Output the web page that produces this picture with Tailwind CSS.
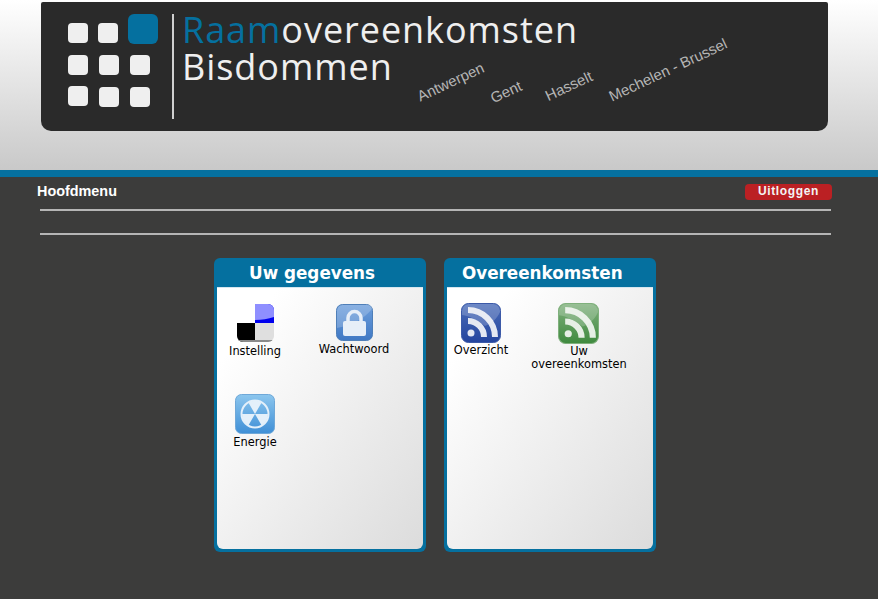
<!DOCTYPE html>
<html lang="nl">
<head>
    <meta charset="UTF-8">
    <meta name="viewport" content="width=device-width, initial-scale=1.0">
    <title>Raamovereenkomsten Bisdommen</title>
    <script src="https://cdn.jsdelivr.net/npm/@tailwindcss/browser@4"></script>
</head>
<body class="h-[599px] overflow-hidden bg-[#3c3c3b] font-['DejaVu_Sans',sans-serif]">

    <!-- Header -->
    <header class="h-[177px] border-b-[7px] border-[#05709f] bg-gradient-to-b from-[#ffffff] to-[#c9c9c9] pt-[2px]">
        <div class="relative ml-[41px] flex h-[129px] w-[787px] items-start rounded-b-[10px] rounded-t-[2px] bg-[#2a2a2a] pt-[12px]">
            <!-- Logo mark -->
            <svg class="ml-[27px] h-[93px] w-[90px] shrink-0" viewBox="0 0 90 93">
                <g fill="#efefef">
                    <rect x="0" y="9" width="20" height="20" rx="4"/>
                    <rect x="30" y="9" width="20" height="20" rx="4"/>
                    <rect x="0" y="41" width="20" height="20" rx="4"/>
                    <rect x="31" y="41" width="20" height="20" rx="4"/>
                    <rect x="62" y="41" width="20" height="20" rx="4"/>
                    <rect x="0" y="72" width="20" height="20" rx="4"/>
                    <rect x="31" y="73" width="20" height="20" rx="4"/>
                    <rect x="62" y="73" width="20" height="20" rx="4"/>
                </g>
                <rect x="60" y="0" width="30" height="30" rx="6" fill="#05709f"/>
            </svg>
            <div class="ml-[14px] h-[105px] w-[2px] shrink-0 bg-[#cfcfcf]"></div>
            <div class="ml-[8px] -mt-[3px] font-['Open_Sans',sans-serif] text-[36px] leading-[37px] tracking-[0.95px] text-[#efefef]">
                <div><span class="text-[#05709f]">Raam</span>overeenkomsten</div>
                <div>Bisdommen</div>
            </div>
            <!-- Bisdommen labels -->
            <span class="absolute left-[374px] top-[69px] -rotate-[25deg] font-['Liberation_Sans',sans-serif] text-[15px] text-[#b5b5b5]">Antwerpen</span>
            <span class="absolute left-[449px] top-[79px] -rotate-[25deg] font-['Liberation_Sans',sans-serif] text-[15px] text-[#b5b5b5]">Gent</span>
            <span class="absolute left-[503px] top-[73px] -rotate-[25deg] font-['Liberation_Sans',sans-serif] text-[15px] text-[#b5b5b5]">Hasselt</span>
            <span class="absolute left-[563px] top-[57px] -rotate-[25deg] font-['Liberation_Sans',sans-serif] text-[15px] text-[#b5b5b5]">Mechelen - Brussel</span>
        </div>
    </header>

    <!-- Menu bar -->
    <div class="ml-[37px] w-[795px] pt-[6px]">
        <div class="flex h-[17px] items-center justify-between">
            <span class="font-['Liberation_Sans',sans-serif] text-[14.4px] font-bold text-white">Hoofdmenu</span>
            <span class="flex h-[16px] w-[87px] items-center justify-center rounded-[4px] bg-[#bb2023] pb-[1px] font-['Liberation_Sans',sans-serif] text-[12px] font-bold tracking-[0.65px] text-[#f3f3f3]">Uitloggen</span>
        </div>
        <div class="ml-[3px] mt-[9px] h-[2px] w-[791px] bg-[#b5b5b5]"></div>
        <div class="ml-[3px] mt-[22px] h-[2px] w-[791px] bg-[#b5b5b5]"></div>
    </div>

    <!-- Panels -->
    <main class="ml-[214px] mt-[23px] flex gap-[18px]">

        <section class="h-[294px] w-[212px] rounded-[6px] bg-[#05709f] px-[3px] pb-[3px]">
            <h2 class="h-[29px] pl-[32px] pt-[4px] text-[16.8px] font-bold leading-[22px] text-white">Uw gegevens</h2>
            <div class="grid h-[262px] grid-cols-[76px_122px] grid-rows-[90px_90px] content-start rounded-b-[6px] border-t border-[#d5e6ef] bg-gradient-to-br from-white from-[15%] to-[#dcdcdc] pt-[16px] text-[11.4px] leading-[13px] text-black">
                <a class="flex flex-col items-center">
                    <svg class="h-[38px] w-[38px]" viewBox="0 0 38 38">
                        <defs><clipPath id="dl"><rect x="1" y="0" width="37" height="38" rx="6"/></clipPath></defs>
                        <g clip-path="url(#dl)">
                            <rect x="0" y="0" width="19" height="19" fill="#ffffff"/>
                            <rect x="19" y="0" width="19" height="19" fill="#0000ee"/>
                            <path d="M19 0h19v13c-6 2-12 3-19 3z" fill="#8f8fff"/>
                            <rect x="0" y="19" width="19" height="19" fill="#000000"/>
                            <rect x="19" y="19" width="19" height="19" fill="#dfdfdf"/>
                            <rect x="1" y="36" width="37" height="2" fill="#8a8a8a"/>
                        </g>
                    </svg>
                    <span class="mt-[3px] text-center">Instelling</span>
                </a>
                <a class="flex flex-col items-center">
                    <svg class="h-[37px] w-[37px]" viewBox="0 0 37 37">
                        <defs><linearGradient id="lk" x1="0" y1="0" x2="0" y2="1"><stop offset="0" stop-color="#6e9fdc"/><stop offset="1" stop-color="#3f78c4"/></linearGradient></defs>
                        <rect x="0.500" y="0.500" width="36" height="36" rx="6" fill="url(#lk)" stroke="#4f7fb8"/>
                        <path d="M1 7a6 6 0 0 1 6-6h29v4c-8 10-20 16-35 19z" fill="#ffffff" opacity="0.2"/>
                        <path d="M12 18v-4a6.500 6.500 0 0 1 13 0v4" fill="none" stroke="#e6eef8" stroke-width="3.500"/>
                        <rect x="7" y="17" width="23" height="15" rx="2" fill="#e6eef8"/>
                    </svg>
                    <span class="mt-[2px] text-center">Wachtwoord</span>
                </a>
                <a class="flex flex-col items-center">
                    <svg class="h-[40px] w-[40px]" viewBox="0 0 40 40">
                        <defs><linearGradient id="en" x1="0" y1="0" x2="0" y2="1"><stop offset="0" stop-color="#8cc6ee"/><stop offset="1" stop-color="#3f8fd6"/></linearGradient></defs>
                        <rect x="0.500" y="0.500" width="39" height="39" rx="6" fill="url(#en)" stroke="#6fa8d8"/>
                        <circle cx="20" cy="20" r="13.500" fill="none" stroke="#e4f0fa" stroke-width="2"/>
                        <path d="M20 20L13.500 8.700A13 13 0 0 1 26.500 8.700Z M20 20L33 20A13 13 0 0 1 26.500 31.300Z M20 20L13.500 31.300A13 13 0 0 1 7 20Z" fill="#e4f0fa"/>
                    </svg>
                    <span class="mt-[2px] text-center">Energie</span>
                </a>
            </div>
        </section>

        <section class="h-[294px] w-[212px] rounded-[6px] bg-[#05709f] px-[3px] pb-[3px]">
            <h2 class="h-[29px] pl-[15px] pt-[4px] text-[16.8px] font-bold leading-[22px] text-white">Overeenkomsten</h2>
            <div class="grid h-[262px] grid-cols-[68px_128px] content-start rounded-b-[6px] border-t border-[#d5e6ef] bg-gradient-to-br from-white from-[15%] to-[#dcdcdc] pt-[15px] text-[11.4px] leading-[13px] text-black">
                <a class="flex flex-col items-center">
                    <svg class="h-[40px] w-[40px]" viewBox="0 0 40 40">
                        <defs><linearGradient id="rb" x1="0" y1="0" x2="0" y2="1"><stop offset="0" stop-color="#4a6cb8"/><stop offset="1" stop-color="#24459e"/></linearGradient>
                        <clipPath id="rbc"><rect x="1" y="1" width="38" height="38" rx="7"/></clipPath></defs>
                        <rect x="0.500" y="0.500" width="39" height="39" rx="7" fill="url(#rb)" stroke="#3c5aa8"/>
                        <g clip-path="url(#rbc)">
                            <circle cx="10" cy="30" r="3.500" fill="#e4e8f2"/>
                            <path d="M7 18a16 16 0 0 1 16 16" fill="none" stroke="#e4e8f2" stroke-width="6"/>
                            <path d="M7 7a27 27 0 0 1 27 27" fill="none" stroke="#e4e8f2" stroke-width="6"/>
                            <path d="M1 1h38v8c-3 7-9 12-15 14c-8-6-15-10-23-11z" fill="#ffffff" opacity="0.2"/>
                        </g>
                    </svg>
                    <span class="mt-[1px] text-center">Overzicht</span>
                </a>
                <a class="flex flex-col items-center">
                    <svg class="h-[41px] w-[41px] -translate-x-[1px]" viewBox="0 0 40 40">
                        <defs><linearGradient id="rg" x1="0" y1="0" x2="0" y2="1"><stop offset="0" stop-color="#7fb07c"/><stop offset="1" stop-color="#3f8a3f"/></linearGradient>
                        <clipPath id="rgc"><rect x="1" y="1" width="38" height="38" rx="7"/></clipPath></defs>
                        <rect x="0.500" y="0.500" width="39" height="39" rx="7" fill="url(#rg)" stroke="#7fb07c"/>
                        <g clip-path="url(#rgc)">
                            <circle cx="10" cy="30" r="3.500" fill="#e6efe5"/>
                            <path d="M7 18a16 16 0 0 1 16 16" fill="none" stroke="#e6efe5" stroke-width="6"/>
                            <path d="M7 7a27 27 0 0 1 27 27" fill="none" stroke="#e6efe5" stroke-width="6"/>
                            <path d="M1 1h38v8c-3 7-9 12-15 14c-8-6-15-10-23-11z" fill="#ffffff" opacity="0.2"/>
                        </g>
                    </svg>
                    <span class="mt-[1px] text-center">Uw<br>overeenkomsten</span>
                </a>
            </div>
        </section>
    </main>

</body>
</html>
